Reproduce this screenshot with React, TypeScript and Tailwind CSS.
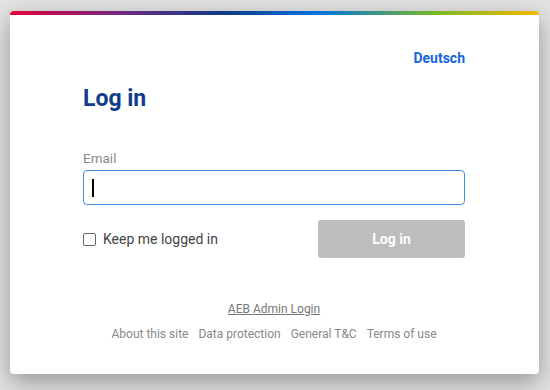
export default function App() {
  return (
    <div className="flex h-[390px] w-[550px] items-start bg-[#e3e3e3] pl-[10px] pt-[11px] font-['Roboto',sans-serif]">
      <div className="w-[529px] overflow-hidden rounded-[4px] bg-white shadow-[0_8px_24px_rgba(0,0,0,0.35)]">
        <div className="h-[4px] bg-[linear-gradient(90deg,#e4003a_0%,#6a2b84_22%,#0e3a83_40%,#0072e0_58%,#76b82a_80%,#f5b800_100%)]" />
        <div className="pb-[31px] pl-[73px] pr-[74px] pt-[33px]">
          <div className="flex justify-end">
            <span className="text-[14px] font-bold text-[#1565e0]">Deutsch</span>
          </div>
          <h1 className="mt-[16px] text-[23px] font-bold leading-[28px] text-[#103c8c]">Log in</h1>
          <label className="mt-[37px] block text-[13.5px] leading-[17px] text-[#8a8a8a]">Email</label>
          <div className="mt-[3px] flex h-[35px] items-center rounded-[4px] border border-[#3d8ee6] px-[8px]">
            <span className="h-[18px] w-[2px] bg-black" />
          </div>
          <div className="mt-[15px] flex items-center justify-between">
            <label className="flex items-center gap-[7px] text-[14px] text-[#444]">
              <span className="h-[13px] w-[13px] rounded-[2px] border border-[#666] bg-white" />
              Keep me logged in
            </label>
            <button className="h-[38px] w-[147px] rounded-[3px] bg-[#bdbdbd] text-[14px] font-bold text-white">
              Log in
            </button>
          </div>
          <div className="mt-[42px] text-center text-[12px] text-[#777] underline">AEB Admin Login</div>
          <div className="mt-[7px] flex justify-center gap-[10px] text-[12px] text-[#888]">
            <span>About this site</span>
            <span>Data protection</span>
            <span>General T&amp;C</span>
            <span>Terms of use</span>
          </div>
        </div>
      </div>
    </div>
  )
}
